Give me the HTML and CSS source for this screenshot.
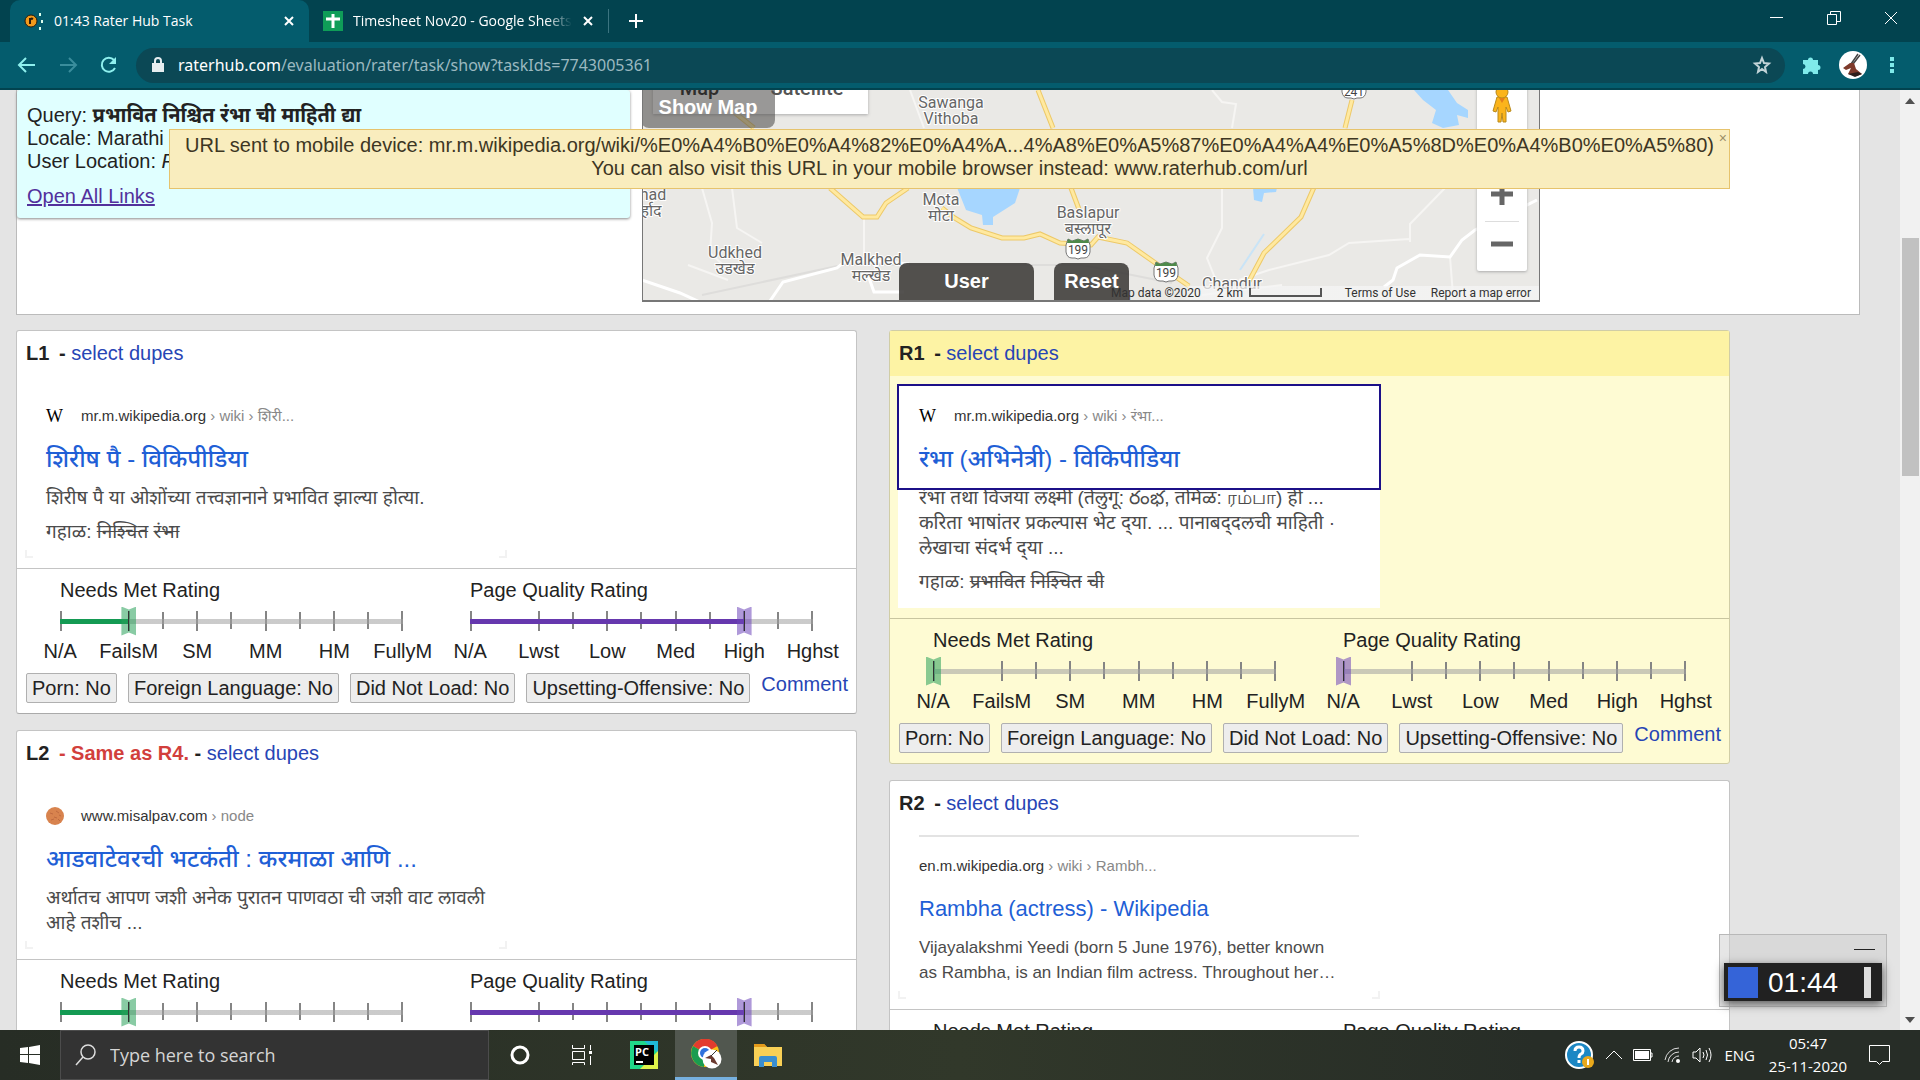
FILE: index.html
```html
<!DOCTYPE html>
<html lang="mr">
<head>
<meta charset="utf-8">
<title>01:43 Rater Hub Task</title>
<link rel="stylesheet" href="styles.css">
</head>
<body>
<svg class="defs" aria-hidden="true">
  <symbol id="ticks" viewBox="0 0 343 20">
    <path d="M1 0v20M69 0v20M137 0v20M206 0v20M274 0v20M342 0v20M103 1v17M171 1v17M240 1v17M308 1v17" stroke="#858585" stroke-width="2"/>
  </symbol>
  <symbol id="shield" viewBox="0 0 26 22">
    <path d="M3 1l4 2 6-2 6 2 4-2 2 6v7q-1 6-6 6h-3l-3 1-3-1H7q-5 0-6-6V7z" fill="#fff" stroke="#777"/>
    <path d="M3 1l4 2 6-2 6 2 4-2 1 4H2z" fill="#4f8a4b"/>
  </symbol>
</svg>

<header class="tabs">
  <div class="tab tab-active">
    <svg class="tab-icon" viewBox="0 0 20 20"><circle cx="7" cy="10" r="6" fill="#f29a1c" stroke="#2b1c0c"/><path d="M6 7v6M6 9q1-2 3-1" stroke="#2b1c0c" stroke-width="2" fill="none"/><path d="M16 2v3M18 9v3M16 16v3" stroke="#dfe" stroke-width="2"/></svg>
    <span class="tab-title">01:43 Rater Hub Task</span>
    <button class="icon-button" aria-label="Close tab"><svg width="12" height="12" viewBox="0 0 12 12"><path d="M2 2l8 8M10 2L2 10" stroke="#fff" stroke-width="2"/></svg></button>
  </div>
  <div class="tab tab-wide">
    <svg class="tab-icon" viewBox="0 0 20 20"><path fill="#0f9d58" d="M0 0h20v20H0z"/><path d="M10 3v14M3 8h14" stroke="#fff" stroke-width="3"/></svg>
    <span class="tab-title tab-fade">Timesheet Nov20 - Google Sheets</span>
    <button class="icon-button" aria-label="Close tab"><svg width="12" height="12" viewBox="0 0 12 12"><path d="M2 2l8 8M10 2L2 10" stroke="#fff" stroke-width="2"/></svg></button>
  </div>
  <button class="icon-button new-tab" aria-label="New tab"><svg width="16" height="16" viewBox="0 0 16 16"><path d="M8 1v14M1 8h14" stroke="#fff" stroke-width="2"/></svg></button>
  <div class="window-controls">
    <button class="icon-button" aria-label="Minimize"><svg width="14" height="14" viewBox="0 0 14 14"><path d="M0 6.500h13" stroke="#fff"/></svg></button>
    <button class="icon-button" aria-label="Restore"><svg width="14" height="14" viewBox="0 0 14 14"><path d="M.5 3.500h9v10h-9zM3.500 3V.5h10v10H10" fill="none" stroke="#fff"/></svg></button>
    <button class="icon-button" aria-label="Close"><svg width="14" height="14" viewBox="0 0 14 14"><path d="M1 1l12 12M13 1L1 13" stroke="#fff"/></svg></button>
  </div>
</header>

<nav class="toolbar">
  <button class="icon-button" aria-label="Back"><svg width="20" height="20" viewBox="0 0 20 20"><path d="M18 10H3M9 3l-7 7 7 7" fill="none" stroke="#8ff0ee" stroke-width="2"/></svg></button>
  <button class="icon-button" aria-label="Forward"><svg width="20" height="20" viewBox="0 0 20 20"><path d="M2 10h15M11 3l7 7-7 7" fill="none" stroke="#3a8d9c" stroke-width="2"/></svg></button>
  <button class="icon-button" aria-label="Reload"><svg width="20" height="20" viewBox="0 0 20 20"><path d="M15 5a7 7 0 1 0 1 8" fill="none" stroke="#8ff0ee" stroke-width="2"/><path d="M17 2v7h-7z" fill="#8ff0ee"/></svg></button>
  <div class="omnibox">
    <svg width="12" height="16" viewBox="0 0 12 16"><path d="M0 6h12v9H0z" fill="#e6eef0"/><path d="M3 6V4a3 3 0 0 1 6 0v2" fill="none" stroke="#e6eef0" stroke-width="2"/></svg>
    <div class="url"><b>raterhub.com</b>/evaluation/rater/task/show?taskIds=7743005361</div>
    <button class="icon-button" aria-label="Bookmark"><svg width="20" height="20" viewBox="0 0 20 20"><path d="M10 3l2 5 5 .5-4 3.500 1 5-4-3-4 3 1-5-4-3.500L8 8z" fill="none" stroke="#c3d4d8" stroke-width="2"/></svg></button>
  </div>
  <button class="icon-button" aria-label="Extensions"><svg width="20" height="20" viewBox="0 0 20 20"><path d="M1 5h5a2.500 2.500 0 1 1 5 0h5v5a2.500 2.500 0 1 1 0 5v4h-5a2.500 2.500 0 0 0-5 0H1v-5a2.500 2.500 0 0 0 0-5z" fill="#7feaea"/></svg></button>
  <button class="icon-button avatar" aria-label="Profile"><svg width="28" height="28" viewBox="0 0 28 28"><circle cx="14" cy="14" r="14" fill="#fff"/><path d="M12 13l7-10M14 13l7-9" stroke="#444" stroke-width="1.500"/><path d="M4 17l7-5 4 0 2 6 6 5-5 2-9-2 3-6-5 2z" fill="#7d3a2b"/><path d="M9 23l7 3 7-3-4-2z" fill="#2c1d1b"/></svg></button>
  <button class="icon-button" aria-label="Menu"><svg width="4" height="18" viewBox="0 0 4 18"><path d="M0 1h4v4H0zM0 7h4v4H0zM0 13h4v4H0z" fill="#7feaea"/></svg></button>
</nav>

<div class="viewport">
<main class="page">
  <section class="task">
    <div class="query">
      <div>Query: <b>प्रभावित निश्चित रंभा ची माहिती द्या</b></div>
      <div>Locale: Marathi</div>
      <div>User Location: <i>Pune</i></div>
      <a href="#" class="open-all">Open All Links</a>
    </div>
    <div class="map">
      <svg class="map-art" viewBox="1 0 898 211" preserveAspectRatio="xMinYMin slice">
        <g fill="none" stroke="#f6f5f3" stroke-width="2">
          <path d="M60 98l10 35-2 30 22 20M90 98l5 40 25 15M222 127v40M268 0l14 38M580 98v40l-15 30 8 20M597 190l30-10 60-15 20-12 60-4M768 152v-18l35-36M808 167l3 38M570 0l10 12 14 2-4 24M46 175l40 15M560 205l80-10"/>
          <path d="M60 205l140-30 240 0 90 18" stroke="#dedddb"/>
        </g>
        <path d="M0 190l38 13 22 10M128 211l13-19 54-14 12-10 60 6M226 185l6 17h30M742 197l9-7 4-12 23-13 30 2 12-17 13-10 34-16 28-14" fill="none" stroke="#fff" stroke-width="3"/>
        <path d="M308 80l60 0 10 18-5 15-22 14v8h-10l-1-10-16-5zM772 0h34l9 13 11 7v8l-11-3 2 10-16 3-11-5 4-13-13-10zM611 98h24l-1 4-12 1-2 9-8-2z" fill="#a6d6ff"/>
        <path d="M598 180l24-36" stroke="#c9e4f7" stroke-width="2"/>
        <path fill="none" stroke="#edc968" stroke-width="5" d="M87 18l25 20M188 98l33 29h14l9-14 22-15M300 118l11 9 18 11 31 10h22l16-4 20 9 31 2 7-8 29 6 27 19 35 24M396 0l15 38M429 98l9 24M710 10l-7 28M673 95l-14 32-37 36-16 30"/>
        <path fill="none" stroke="#ffe9a0" stroke-width="3" d="M87 18l25 20M188 98l33 29h14l9-14 22-15M300 118l11 9 18 11 31 10h22l16-4 20 9 31 2 7-8 29 6 27 19 35 24M396 0l15 38M429 98l9 24M710 10l-7 28M673 95l-14 32-37 36-16 30"/>
        <use href="#shield" x="423" y="148" width="26" height="22"/>
        <use href="#shield" x="511" y="171" width="26" height="22"/>
        <use href="#shield" x="699" y="-12" width="26" height="22"/>
        <g class="shield-text"><text x="436" y="164">199</text><text x="524" y="187">199</text><text x="712" y="6">241</text></g>
        <g class="place">
          <text x="309" y="18">Sawanga</text><text x="309" y="34">Vithoba</text>
          <text x="299" y="115">Mota</text><text x="299" y="131">मोटा</text>
          <text x="446" y="128">Baslapur</text><text x="446" y="144">बस्लापूर</text>
          <text x="93" y="168">Udkhed</text><text x="93" y="184">उडखेड</text>
          <text x="229" y="175">Malkhed</text><text x="229" y="191">मल्खेड</text>
          <text x="590" y="199">Chandur</text>
          <text x="11" y="110">had</text><text x="9" y="126">र्हाद</text>
        </g>
      </svg>
      <div class="map-type"><button>Map</button><button>Satellite</button></div>
      <button class="map-button show-map">Show Map</button>
      <div class="zoom-box pegman-box"><button aria-label="Street view"><svg width="24" height="36" viewBox="0 0 24 36"><path d="M7 10h10l4 14-3 1-2-5v15h-3l-1-9-1 9H8V20l-2 5-3-1z" fill="#fbb41b" stroke="#b98a1c"/><circle cx="12" cy="5" r="6" fill="#fbb41b" stroke="#b98a1c"/><path d="M9 11h6l-3 5z" fill="#e4801c"/></svg></button></div>
      <div class="zoom-box">
        <button aria-label="Zoom in"><svg width="22" height="22" viewBox="0 0 22 22"><path d="M11 0v22M0 11h22" stroke="#666" stroke-width="5"/></svg></button>
        <button aria-label="Zoom out"><svg width="22" height="22" viewBox="0 0 22 22"><path d="M0 11h22" stroke="#666" stroke-width="5"/></svg></button>
      </div>
      <div class="map-foot">
        <button class="map-button user">User</button>
        <button class="map-button reset">Reset</button>
      </div>
      <div class="map-legal">
        <span>Map data ©2020 &nbsp;</span><span>2 km</span>
        <svg width="73" height="10" viewBox="0 0 73 10"><path d="M1 0v8h71V0" fill="none" stroke="#555" stroke-width="2"/></svg>
        <a href="#">Terms of Use</a><a href="#">Report a map error</a>
      </div>
    </div>
  </section>

  <div class="columns">
    <div class="column">
      <article class="card">
        <h2>L1 <span class="dash">-</span> <a href="#">select dupes</a></h2>
        <div class="result">
          <a href="#" class="result-link">
            <span class="site"><span class="wiki">W</span>mr.m.wikipedia.org<small> › wiki › शिरी...</small></span>
            <span class="title">शिरीष पै - विकिपीडिया</span>
          </a>
          <p>शिरीष पै या ओशोंच्या तत्त्वज्ञानाने प्रभावित झाल्या होत्या.</p>
          <p class="missing">गहाळ: <s>निश्‍चित</s> <s>रंभा</s></p>
        </div>
        <div class="ratings">
          <div class="sliders">
            <div class="slider green">
              <label for="l1n">Needs Met Rating</label>
              <div class="track"><svg class="ticks"><use href="#ticks"/></svg><input id="l1n" type="range" min="0" max="10" value="2" style="--fill:20%"></div>
              <div class="scale"><span>N/A</span><span>FailsM</span><span>SM</span><span>MM</span><span>HM</span><span>FullyM</span></div>
            </div>
            <div class="slider purple">
              <label for="l1p">Page Quality Rating</label>
              <div class="track"><svg class="ticks"><use href="#ticks"/></svg><input id="l1p" type="range" min="0" max="10" value="8" style="--fill:80%"></div>
              <div class="scale"><span>N/A</span><span>Lwst</span><span>Low</span><span>Med</span><span>High</span><span>Hghst</span></div>
            </div>
          </div>
          <div class="flags"><button>Porn: No</button><button>Foreign Language: No</button><button>Did Not Load: No</button><button>Upsetting-Offensive: No</button><a href="#">Comment</a></div>
        </div>
      </article>

      <article class="card">
        <h2>L2 <span class="dash same">- Same as R4.</span> - <a href="#">select dupes</a></h2>
        <div class="result">
          <a href="#" class="result-link">
            <span class="site"><svg class="favicon" viewBox="0 0 18 18"><circle cx="9" cy="9" r="9" fill="#d8834e"/><path d="M4 6l3 1M10 4l3 2M8 10l3 1M5 13l3-1M12 12l2 2M13 8l2 1" stroke="#bf6a40"/></svg>www.misalpav.com<small> › node</small></span>
            <span class="title">आडवाटेवरची भटकंती : करमाळा आणि ...</span>
          </a>
          <p>अर्थातच आपण जशी अनेक पुरातन पाणवठा ची जशी वाट लावली<br>आहे तशीच ...</p>
        </div>
        <div class="ratings">
          <div class="sliders">
            <div class="slider green">
              <label for="l2n">Needs Met Rating</label>
              <div class="track"><svg class="ticks"><use href="#ticks"/></svg><input id="l2n" type="range" min="0" max="10" value="2" style="--fill:20%"></div>
            </div>
            <div class="slider purple">
              <label for="l2p">Page Quality Rating</label>
              <div class="track"><svg class="ticks"><use href="#ticks"/></svg><input id="l2p" type="range" min="0" max="10" value="8" style="--fill:80%"></div>
            </div>
          </div>
        </div>
      </article>
    </div>

    <div class="column">
      <article class="card selected">
        <h2>R1 <span class="dash">-</span> <a href="#">select dupes</a></h2>
        <div class="result">
          <a href="#" class="result-link focused">
            <span class="site"><span class="wiki">W</span>mr.m.wikipedia.org<small> › wiki › रंभा...</small></span>
            <span class="title">रंभा (अभिनेत्री) - विकिपीडिया</span>
          </a>
          <p>रंभा तथा विजया लक्ष्मी (तेलुगू: రంభ, तमिळ: ரம்பா) ही ...<br>करिता भाषांतर प्रकल्पास भेट द्‌या. ... पानाबद्‌दलची माहिती ·<br>लेखाचा संदर्भ द्‌या ...</p>
          <p class="missing">गहाळ: <s>प्रभावित</s> <s>निश्‍चित</s> <s>ची</s></p>
        </div>
        <div class="ratings">
          <div class="sliders">
            <div class="slider green">
              <label for="r1n">Needs Met Rating</label>
              <div class="track"><svg class="ticks"><use href="#ticks"/></svg><input id="r1n" type="range" min="0" max="10" value="0" style="--fill:0%"></div>
              <div class="scale"><span>N/A</span><span>FailsM</span><span>SM</span><span>MM</span><span>HM</span><span>FullyM</span></div>
            </div>
            <div class="slider purple">
              <label for="r1p">Page Quality Rating</label>
              <div class="track"><svg class="ticks"><use href="#ticks"/></svg><input id="r1p" type="range" min="0" max="10" value="0" style="--fill:0%"></div>
              <div class="scale"><span>N/A</span><span>Lwst</span><span>Low</span><span>Med</span><span>High</span><span>Hghst</span></div>
            </div>
          </div>
          <div class="flags"><button>Porn: No</button><button>Foreign Language: No</button><button>Did Not Load: No</button><button>Upsetting-Offensive: No</button><a href="#">Comment</a></div>
        </div>
      </article>

      <article class="card">
        <h2>R2 <span class="dash">-</span> <a href="#">select dupes</a></h2>
        <div class="result ruled">
          <a href="#" class="result-link">
            <span class="site">en.m.wikipedia.org<small> › wiki › Rambh...</small></span>
            <span class="title latin-title">Rambha (actress) - Wikipedia</span>
          </a>
          <p class="latin">Vijayalakshmi Yeedi (born 5 June 1976), better known<br>as Rambha, is an Indian film actress. Throughout her…</p>
        </div>
        <div class="ratings">
          <div class="sliders">
            <div class="slider green"><label for="r2n">Needs Met Rating</label><div class="track"><input id="r2n" type="range" min="0" max="10" value="0" style="--fill:0%"></div></div>
            <div class="slider purple"><label for="r2p">Page Quality Rating</label><div class="track"><input id="r2p" type="range" min="0" max="10" value="0" style="--fill:0%"></div></div>
          </div>
        </div>
      </article>
    </div>
  </div>
</main>

<div class="scrollbar">
  <svg width="10" height="6" viewBox="0 0 10 6"><path d="M0 6l5-6 5 6z" fill="#505050"/></svg>
  <div class="thumb"></div>
  <svg width="10" height="6" viewBox="0 0 10 6"><path d="M0 0l5 6 5-6z" fill="#505050"/></svg>
</div>

<div class="toast">
  <div>URL sent to mobile device: mr.m.wikipedia.org/wiki/%E0%A4%B0%E0%A4%82%E0%A4%A...4%A8%E0%A5%87%E0%A4%A4%E0%A5%8D%E0%A4%B0%E0%A5%80)</div>
  <div>You can also visit this URL in your mobile browser instead: www.raterhub.com/url</div>
  <button aria-label="Dismiss">×</button>
</div>

<div class="timer">
  <div class="timer-bar"></div>
  <div class="timer-body"><span class="timer-blue"></span><span>01:44</span><span class="timer-white"></span></div>
</div>
</div>

<footer class="taskbar">
  <button class="icon-button start" aria-label="Start"><svg width="20" height="20" viewBox="0 0 20 20"><path d="M0 3l8-1v7H0zM9 2l11-2v9H9zM0 10h8v8l-8-1zM9 10h11v10L9 18z" fill="#fff"/></svg></button>
  <label class="search"><svg width="22" height="22" viewBox="0 0 22 22"><circle cx="13" cy="8" r="7" fill="none" stroke="#ddd" stroke-width="1.500"/><path d="M8 13l-7 8" stroke="#ddd" stroke-width="1.500"/></svg><input type="text" placeholder="Type here to search" aria-label="Type here to search"></label>
  <button class="icon-button app" aria-label="Cortana"><svg width="20" height="20" viewBox="0 0 20 20"><circle cx="10" cy="10" r="8" fill="none" stroke="#fff" stroke-width="3"/></svg></button>
  <button class="icon-button app" aria-label="Task view"><svg width="20" height="20" viewBox="0 0 20 20"><path d="M.5 0v3.500h12V0M.5 6.500h12v8H.5zM.5 20v-2.500h12V20M18.500 0v5M18.500 11v9" fill="none" stroke="#fff"/><path d="M17 6h3v3h-3z" fill="#fff"/></svg></button>
  <button class="icon-button app" aria-label="PyCharm"><svg width="28" height="28" viewBox="0 0 28 28"><path d="M0 0h28v28H0z" fill="#21d789"/><path d="M14 0h14v12z" fill="#1fb9d8"/><path d="M28 10v18H10z" fill="#dff24a"/><path d="M4 4h20v20H4z" fill="#000"/><path d="M6 21h7" stroke="#fff" stroke-width="2"/><text x="5" y="15" class="pc">PC</text></svg></button>
  <button class="icon-button app current" aria-label="Chrome"><svg width="32" height="30" viewBox="0 0 32 30"><circle cx="15" cy="14" r="14" fill="#fbc116"/><path d="M15 14L3 7a14 14 0 0 1 24.500 0z" fill="#e33b2e"/><path d="M15 14L3 7a14 14 0 0 0 11 21z" fill="#1a9c50"/><circle cx="15" cy="14" r="7" fill="#fff"/><circle cx="15" cy="14" r="5" fill="#2f72dd"/><circle cx="22" cy="20" r="9.500" fill="#fff"/><path d="M15 19l6-3 3 3 4 7-7-3v-3z" fill="#6b3a30"/><path d="M21 17l6-6" stroke="#333"/></svg></button>
  <button class="icon-button app" aria-label="Explorer"><svg width="28" height="24" viewBox="0 0 28 24"><path d="M0 1h10l3 3h15v19H0z" fill="#f9d056"/><path d="M0 1h10l3 3H0z" fill="#e39a1b"/><path d="M5 24v-9q0-2 2-2h14q2 0 2 2v9h-5v-5h-8v5z" fill="#3a8ed0"/></svg></button>
  <div class="tray">
    <svg width="30" height="28" viewBox="0 0 30 28"><circle cx="14" cy="14" r="13" fill="#1b87c4" stroke="#fff" stroke-width="2"/><path d="M10 10q0-4 4-4t4 4q0 2-2 3t-2 4M14 19v3" stroke="#fff" stroke-width="3" fill="none"/><circle cx="23" cy="21" r="6" fill="#e9a91b"/><path d="M23 18v6" stroke="#fff" stroke-width="2"/></svg>
    <svg width="16" height="10" viewBox="0 0 16 10"><path d="M0 9l8-8 8 8" fill="none" stroke="#fff"/></svg>
    <svg width="20" height="12" viewBox="0 0 20 12"><path d="M.5.5h17v11H.5zM18 4h1v4h-1" fill="none" stroke="#fff"/><path d="M2 2h14v8H2z" fill="#fff"/></svg>
    <svg width="17" height="16" viewBox="0 0 17 16"><path d="M1 13a14 14 0 0 1 14-12M4 15a11 11 0 0 1 11-10M8 15a7 7 0 0 1 7-6" fill="none" stroke="#ddd"/><circle cx="14" cy="14" r="2" fill="#fff"/></svg>
    <svg width="21" height="18" viewBox="0 0 21 18"><path d="M1 6h3l4-4v14l-4-4H1zM11 6q2 3 0 6M14 4q3 5 0 10M17 2q4 7 0 14" fill="none" stroke="#fff"/></svg>
    <span class="lang">ENG</span>
    <div class="clock"><div>05:47</div><div>25-11-2020</div></div>
    <svg width="21" height="20" viewBox="0 0 21 20"><path d="M.5.500h20v16h-7l-3 3-3-3h-7z" fill="none" stroke="#fff"/></svg>
  </div>
</footer>
</body>
</html>
```
FILE: styles.css
```css
* { box-sizing: border-box; }
body {
  margin: 0;
  height: 100vh;
  display: flex;
  flex-direction: column;
  overflow: hidden;
  background: #e4e4e4;
  color: #222;
  font: 20px/23px "Liberation Sans", "Noto Sans Devanagari", "Noto Sans", sans-serif;
}
button, input { font: inherit; color: inherit; }
h2, p { margin: 0; }
a { color: #2745b5; text-decoration: none; }
.defs { display: none; }
.icon-button {
  display: flex;
  align-items: center;
  justify-content: center;
  padding: 0;
  border: 0;
  background: none;
}

/* browser chrome */
.tabs {
  flex: 0 0 42px;
  display: flex;
  background: #02434f;
  color: #fff;
  font: 15px/20px "Open Sans", "Noto Sans", sans-serif;
  padding-left: 10px;
}
.tab {
  display: flex;
  align-items: center;
  width: 299px;
  padding: 0 14px;
}
.tab-active { background: #045c6d; border-radius: 10px 10px 0 0; }
.tab-icon { width: 20px; height: 20px; flex: none; }
.tab-title {
  flex: 1;
  margin: 0 10px;
  overflow: hidden;
  white-space: nowrap;
  font-size: 14px;
}
.tab-fade { mask-image: linear-gradient(90deg, #000 88%, transparent); }
.new-tab { width: 54px; border-left: 1px solid #3b7480; height: 24px; margin-top: 9px; }
.window-controls { margin: 0 22px 6px auto; display: flex; align-items: center; gap: 43px; }
.toolbar {
  flex: 0 0 48px;
  display: flex;
  align-items: center;
  gap: 21px;
  padding: 0 26px 0 17px;
  background: #045c6d;
  border-bottom: 2px solid #02434f;
}
.omnibox {
  flex: 1;
  display: flex;
  align-items: center;
  height: 35px;
  margin: 0 -4px;
  padding: 0 13px 0 16px;
  border-radius: 18px;
  background: #0b4855;
  color: #9bb9c0;
  font: 16px/24px "Noto Sans", "Open Sans", sans-serif;
}
.url { flex: 1; margin-left: 14px; }
.url b { color: #fff; font-weight: 400; }
.avatar { margin: 0 2px 0 -4px; }

/* page */
.viewport {
  flex: 1;
  min-height: 0;
  position: relative;
  display: flex;
  overflow: hidden;
}
.page { flex: 1; min-width: 0; }
.task {
  display: flex;
  height: 225px;
  margin: 0 40px 15px 16px;
  background: #fff;
  border: solid #bbb;
  border-width: 0 1px 1px;
}
.query {
  flex: 0 0 613px;
  height: 128px;
  margin: 0 12px 0 0;
  padding: 14px 10px;
  background: #e0ffff;
  border-radius: 3px;
  box-shadow: 0 1px 3px #888;
}
.open-all { display: inline-block; margin-top: 12px; color: #52309c; text-decoration: underline; }

.map {
  position: relative;
  flex: 0 0 898px;
  height: 212px;
  overflow: hidden;
  background: #eae9e6;
  border: solid #777;
  border-width: 0 1px 2px;
}
.map-art { display: block; width: 100%; height: 211px; }
.place text {
  font: 16px Roboto, "Noto Sans Devanagari", sans-serif;
  fill: #666;
  text-anchor: middle;
  stroke: #fff;
  stroke-width: 2px;
  paint-order: stroke;
}
.shield-text text { font: 12px Roboto, sans-serif; fill: #444; text-anchor: middle; }
.map button { border: 0; padding: 0; }
.map-type {
  position: absolute;
  left: 10px;
  top: -26px;
  display: flex;
  height: 50px;
  background: #fff;
  box-shadow: 0 1px 3px #aaa;
}
.map-type button { height: 48px; width: 93px; background: none; color: #000; font-weight: 500; font-family: Roboto, sans-serif; }
.map-type button + button { width: 122px; color: #555; }
.map .map-button {
  background: rgba(60, 58, 56, .88);
  color: #fff;
  font-weight: 700;
  border-radius: 8px 8px 0 0;
  height: 37px;
}
.map .show-map {
  position: absolute;
  left: -2px;
  top: -4px;
  width: 134px;
  height: 42px;
  border-radius: 0 0 8px 8px;
  background: rgba(80, 78, 76, .58);
}
.map-foot { position: absolute; left: 256px; bottom: 0; display: flex; gap: 20px; }
.user { width: 135px; }
.reset { width: 75px; }
.zoom-box {
  position: absolute;
  right: 12px;
  top: 81px;
  width: 50px;
  display: flex;
  flex-direction: column;
  background: #fff;
  border-radius: 2px;
  box-shadow: 0 1px 3px #aaa;
}
.zoom-box button { height: 50px; margin: 0 8px; background: none; }
.zoom-box button + button { border-top: 1px solid #ddd; }
.pegman-box { top: -10px; }
.pegman-box button { height: 54px; }
.map-legal {
  position: absolute;
  left: 468px;
  right: 0;
  bottom: 0;
  height: 14px;
  display: flex;
  align-items: center;
  gap: 6px;
  padding-right: 8px;
  background: linear-gradient(90deg, transparent 70px, rgba(245, 245, 245, .75) 80px);
  font: 12px/14px Roboto, sans-serif;
  color: #333;
}
.map-legal span + span { margin-left: 4px; }
.map-legal a { color: #333; margin-left: 9px; }
.map-legal svg + a { margin-left: auto; }

.columns {
  display: grid;
  grid-template-columns: 1fr 1fr;
  gap: 32px;
  padding: 0 170px 0 16px;
}
.column { display: flex; flex-direction: column; gap: 16px; min-width: 0; }
.card {
  background: #fff;
  border: 1px solid #c4c4c4;
  border-bottom-color: #aaa;
  border-radius: 3px;
}
.card h2 {
  height: 45px;
  padding: 0 9px;
  font-size: 20px;
  line-height: 45px;
}
.card h2 a { font-weight: 400; }
.dash { margin-left: 4px; }
.same { color: #d23f3c; }
.result {
  position: relative;
  width: 482px;
  margin: 9px 8px 10px;
  padding: 0 21px 14px;
  background: #fff;
  color: #4b4b4b;
  font-size: 19px;
  line-height: 25px;
}
.result::before, .result::after {
  content: "";
  position: absolute;
  bottom: 0;
  width: 6px;
  height: 6px;
  border-bottom: 2px solid #f2f2f2;
}
.result::before { left: 0; border-left: 2px solid #f2f2f2; }
.result::after { right: 0; border-right: 2px solid #f2f2f2; }
.selected .result::before, .selected .result::after { content: none; }
.result p { white-space: nowrap; }
.result .latin { font-size: 17px; }
.result-link {
  display: block;
  height: 100px;
  margin: 0 -21px;
  padding: 20px 21px 0;
}
.focused {
  position: relative;
  height: 106px;
  margin: -1px -22px -5px;
  padding: 19px 20px 0;
  border: 2px solid #1c1088;
  background: #fff;
}
.site {
  display: flex;
  align-items: center;
  height: 22px;
  color: #333;
  font-size: 15px;
  line-height: 22px;
  white-space: pre;
}
.site small { font-size: 15px; color: #888; }
.wiki { width: 35px; font: 18px/22px "Liberation Serif", serif; color: #000; }
.favicon { width: 18px; height: 18px; margin-right: 17px; }
.title { display: block; margin-top: 12px; font-size: 24px; font-weight: 500; line-height: 40px; color: #1f5fd6; white-space: nowrap; }
.latin-title { font-size: 22px; font-weight: 400; }
.missing { margin-top: 9px; }
.ruled { background: linear-gradient(#e3e3e3, #e3e3e3) 21px 0 / 440px 2px no-repeat #fff; }

.selected { background: #fefbd3; border-color: #d0cda6; }
.selected h2 { background: #fdf3a4; }
.selected .ratings { border-color: #c8c5a0; }

/* rating strip */
.ratings { padding: 9px 9px 10px; border-top: 1px solid #c4c4c4; }
.sliders { display: flex; gap: 67px; padding-left: 34px; }
.slider { width: 343px; }
.slider label { display: block; line-height: 24px; }
.green { --line: #149a53; --thumb: rgba(40, 160, 90, .55); }
.purple { --line: #6638ae; --thumb: rgba(110, 70, 185, .55); }
.track { position: relative; height: 38px; display: flex; align-items: center; }
.ticks { position: absolute; left: 0; top: 9px; width: 343px; height: 20px; }
.track input {
  appearance: none;
  position: relative;
  flex: 1;
  min-width: 0;
  height: 30px;
  margin: 0 -7px;
  background:
    linear-gradient(90deg, var(--line) var(--fill), rgba(160, 160, 160, .55) var(--fill)) center / calc(100% - 14px) 5px no-repeat;
}
.track input::-webkit-slider-thumb {
  appearance: none;
  width: 15px;
  height: 29px;
  background: linear-gradient(#333, #333) center / 1px 20px no-repeat, var(--thumb);
  clip-path: polygon(0 0, 50% 3px, 100% 0, 100% 100%, 50% 26px, 0 100%);
}
.scale { display: flex; margin: 0 -34px; line-height: 22px; }
.scale span { flex: 1; text-align: center; }
.flags { display: flex; gap: 11px; margin-top: 11px; white-space: nowrap; }
.flags button {
  height: 30px;
  padding: 0 5px;
  background: #ededed;
  border: 1px solid #b0b0b0;
  border-radius: 2px;
  line-height: 24px;
}

/* overlays */
.toast {
  position: absolute;
  left: 169px;
  right: 190px;
  top: 39px;
  height: 60px;
  padding: 4px 12px;
  background: #f9edbe;
  border: 1px solid #e6c36d;
  color: #3d3623;
  text-align: center;
  white-space: nowrap;
}
.toast button {
  position: absolute;
  right: 2px;
  top: 0;
  padding: 0;
  border: 0;
  background: none;
  color: #9b8f68;
  font-size: 14px;
  line-height: 16px;
}
.scrollbar {
  flex: 0 0 20px;
  display: flex;
  flex-direction: column;
  align-items: center;
  padding: 8px 0 7px;
  background: #f1f1f1;
}
.thumb { width: 17px; height: 238px; margin: 134px 0 auto; background: #c1c1c1; }
.timer {
  position: absolute;
  right: 33px;
  bottom: 23px;
  width: 168px;
  padding: 0 4px 5px;
  border: 1px solid #b8b8b8;
  background: rgba(205, 205, 205, .5);
}
.timer-bar { height: 28px; display: flex; align-items: center; justify-content: flex-end; }
.timer-bar::after { content: ""; width: 21px; height: 1px; margin-right: 7px; background: #222; }
.timer-body {
  display: flex;
  align-items: center;
  gap: 10px;
  height: 38px;
  padding: 0 11px 0 4px;
  background: #212121;
  color: #fff;
  font-size: 28px;
  box-shadow: 0 3px 9px #555;
}
.timer-blue { width: 30px; height: 31px; background: #3564d8; }
.timer-white { width: 7px; height: 31px; margin-left: auto; background: #ddd; }

/* taskbar */
.taskbar {
  flex: 0 0 50px;
  display: flex;
  background: linear-gradient(90deg, #272d25, #31382a 50%, #272d27 80%);
  color: #fff;
  font: 16px/23px "Open Sans", "Noto Sans", sans-serif;
}
.start { width: 60px; }
.search {
  width: 429px;
  display: flex;
  align-items: center;
  padding: 0 14px;
  background: #333;
  border: 1px solid #4c4c4c;
}
.search input { flex: 1; margin-left: 13px; padding: 0; border: 0; background: none; font-size: 18px; outline: 0; }
.search input::placeholder { color: #d5d5d5; opacity: 1; }
.app { width: 62px; }
.current { background: #51574f; border-bottom: 3px solid #76b0df; }
.pc { font: 700 11px "Open Sans", sans-serif; fill: #fff; }
.tray { margin-left: auto; display: flex; align-items: center; gap: 11px; padding-right: 30px; }
.clock { width: 84px; margin: 0 8px 0 0; text-align: center; font-size: 15px; white-space: nowrap; }
.lang { font-size: 15px; }
```
